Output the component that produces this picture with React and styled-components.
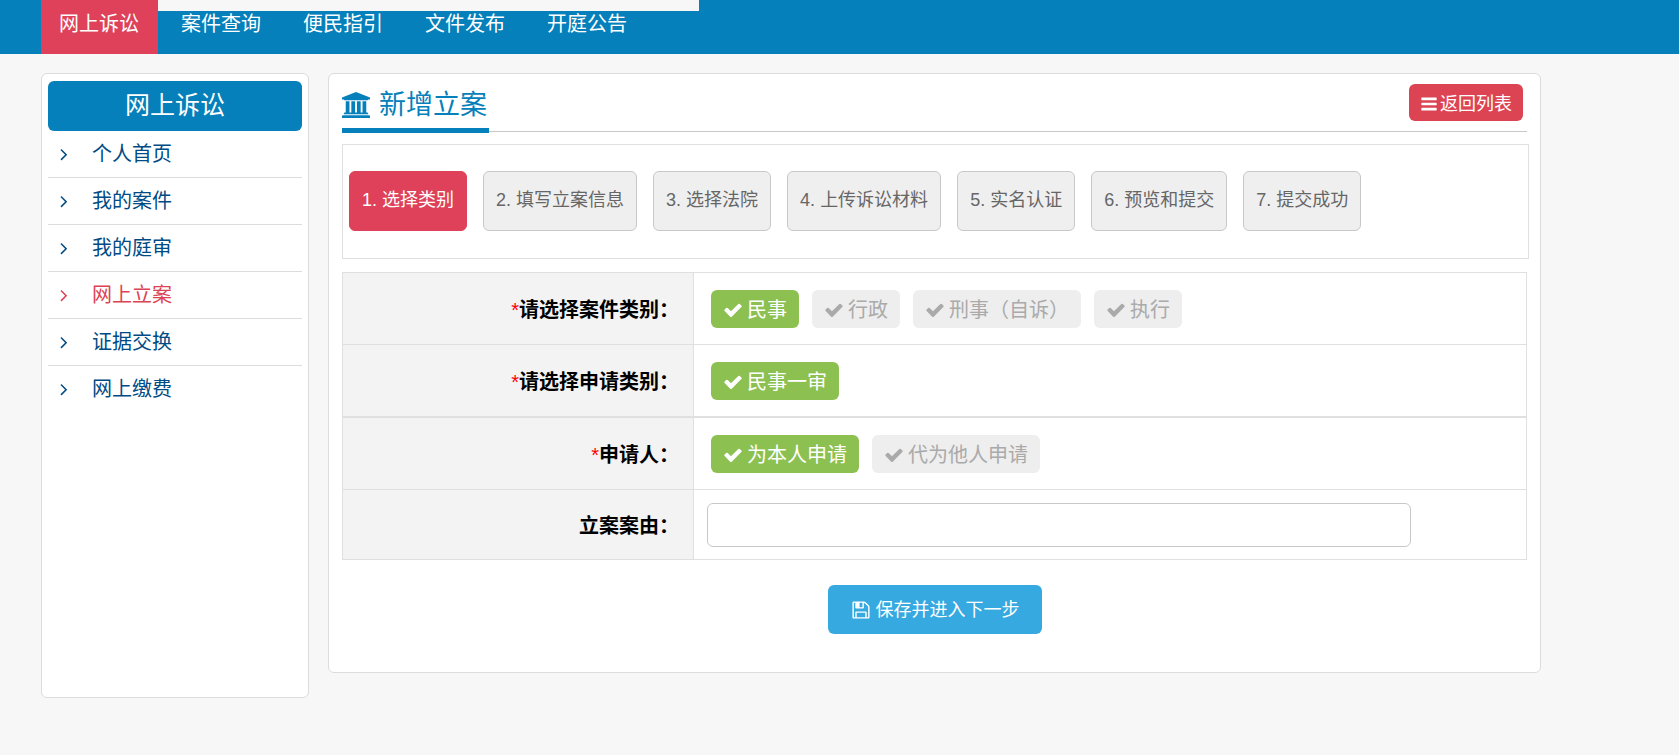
import React, { useState } from 'react';
import styled, { createGlobalStyle } from 'styled-components';

const GlobalStyle = createGlobalStyle`
  *, *::before, *::after {
    box-sizing: border-box;
  }

  body {
    margin: 0;
    background-color: #f7f7f7;
    color: #000;
    font-family: 'Liberation Sans', 'Noto Sans CJK SC', sans-serif;
    font-size: 20px;
    line-height: 30px;
  }

  button, input {
    font: inherit;
  }

  a {
    text-decoration: none;
  }
`;

const NavBar = styled.nav`
  position: relative;
  display: flex;
  gap: 5px;
  height: 54px;
  padding-left: 41px;
  background-color: #0580ba;
`;

const NavLink = styled.a`
  padding: 9px 19px 15px 18px;
  background-color: ${({ $active }) => ($active ? '#de4159' : 'transparent')};
  color: #fff;
  white-space: nowrap;
`;

/* plain strip hanging over the top edge of the menu */
const NavStrip = styled.div`
  position: absolute;
  top: 0;
  left: 158px;
  width: 541px;
  height: 11px;
  background-color: #f7f7f7;
`;

const Page = styled.div`
  display: flex;
  align-items: flex-start;
  gap: 19px;
  padding: 19px 138px 56px 41px;
`;

const Panel = styled.div`
  border: 1px solid #dcdcdc;
  border-radius: 6px;
  background-color: #fff;
`;

const Sidebar = styled(Panel).attrs({ as: 'aside' })`
  flex: 0 0 268px;
  min-height: 625px;
  padding: 7px 6px;
`;

const SidebarTitle = styled.h2`
  margin: 0;
  padding: 8px 0 10px;
  border-radius: 6px;
  background-color: #0580ba;
  color: #fff;
  font-size: 25px;
  font-weight: 400;
  line-height: 32px;
  text-align: center;
`;

const Menu = styled.ul`
  margin: 0;
  padding: 0;
  list-style: none;
`;

const MenuItem = styled.li`
  border-bottom: 1px solid #dcdcdc;

  &:last-child {
    border-bottom: 0;
  }
`;

const MenuLink = styled.a`
  display: flex;
  align-items: center;
  gap: 18px;
  padding: 8px 0 8px 6px;
  color: ${({ $active }) => ($active ? '#dc4453' : '#004b84')};
`;

const Main = styled(Panel).attrs({ as: 'main' })`
  flex: 1;
  min-width: 0;
  min-height: 600px;
  padding: 10px 13px 38px;
`;

const Header = styled.header`
  display: flex;
  align-items: flex-start;
  justify-content: space-between;
  height: 48px;
  border-bottom: 1px solid #c8c8c8;
`;

const Title = styled.h1`
  display: flex;
  align-items: center;
  gap: 9px;
  height: 49px;
  margin: 0;
  padding: 0 2px 2px 0;
  border-bottom: 5px solid #0580ba;
  color: #0580ba;
  font-size: 27px;
  font-weight: 400;
  white-space: nowrap;
`;

const BackLink = styled.a`
  display: flex;
  align-items: center;
  gap: 2px;
  height: 37px;
  margin-right: 4px;
  padding: 2px 11px 0;
  border-radius: 6px;
  background-color: #dc4453;
  color: #fff;
  font-size: 18px;
`;

const Steps = styled.ol`
  display: flex;
  gap: 16px;
  margin: 12px -2px 13px 0;
  padding: 26px 6px 27px;
  border: 1px solid #e0e0e0;
  list-style: none;
`;

const Step = styled.li`
  height: 60px;
  padding: 13px 12px;
  border: 1px solid ${({ $active }) => ($active ? '#de4159' : '#c8c8c8')};
  border-radius: 6px;
  background-color: ${({ $active }) => ($active ? '#de4159' : '#efefef')};
  color: ${({ $active }) => ($active ? '#fff' : '#666')};
  font-size: 18px;
  white-space: nowrap;
`;

const FormTable = styled.table`
  width: 100%;
  border-collapse: collapse;
  table-layout: fixed;
`;

const LabelCell = styled.th`
  width: 351px;
  height: ${({ $short }) => ($short ? 70 : 72)}px;
  padding: 2px 14px 0 0;
  border: 1px solid #e0e0e0;
  background-color: #f3f3f3;
  font-weight: 700;
  text-align: right;
`;

const Required = styled.span`
  color: #f00;
  font-weight: 400;
`;

const FieldCell = styled.td`
  padding: 0 10px 0 13px;
  border: 1px solid #e0e0e0;
`;

const Choices = styled.div`
  display: flex;
  flex-wrap: wrap;
  gap: 13px;
  padding-left: 4px;
`;

const Choice = styled.button`
  display: flex;
  align-items: center;
  gap: 4px;
  height: 38px;
  padding: 3px 12px 0;
  border: 0;
  border-radius: 6px;
  background-color: ${({ $active }) => ($active ? '#8cc152' : '#eee')};
  color: ${({ $active }) => ($active ? '#fff' : '#aaa')};
  cursor: pointer;
`;

const TextInput = styled.input`
  display: block;
  width: 87%;
  height: 44px;
  padding: 6px 12px;
  border: 1px solid #c8c8c8;
  border-radius: 6px;
  background-color: #fff;
`;

const Actions = styled.div`
  display: flex;
  justify-content: center;
  margin-top: 25px;
`;

const SubmitButton = styled.button`
  display: flex;
  align-items: center;
  gap: 5px;
  height: 49px;
  padding: 0 22px 0 23px;
  border: 0;
  border-radius: 6px;
  background-color: #35a9e0;
  color: #fff;
  font-size: 18px;
  cursor: pointer;
`;

const Svg = styled.svg`
  flex: none;
  fill: currentColor;
`;

const ICONS = {
  angle:
    'M1171 960q0 13-10 23l-466 466q-10 10-23 10t-23-10l-50-50q-10-10-10-23t10-23l393-393-393-393q-10-10-10-23t10-23l50-50q10-10 23-10t23 10l466 466q10 10 10 23z',
  bars:
    'M1664 1344v128q0 26-19 45t-45 19h-1408q-26 0-45-19t-19-45v-128q0-26 19-45t45-19h1408q26 0 45 19t19 45zm0-512v128q0 26-19 45t-45 19h-1408q-26 0-45-19t-19-45v-128q0-26 19-45t45-19h1408q26 0 45 19t19 45zm0-512v128q0 26-19 45t-45 19h-1408q-26 0-45-19t-19-45v-128q0-26 19-45t45-19h1408q26 0 45 19t19 45z',
  check:
    'M1671 566q0 40-28 68l-724 724-136 136q-28 28-68 28t-68-28l-136-136-362-362q-28-28-28-68t28-68l136-136q28-28 68-28t68 28l294 295 656-657q28-28 68-28t68 28l136 136q28 28 28 68z',
  save:
    'M512 1536h768v-384h-768v384zm896 0h128v-896q0-14-10-38.5t-20-34.5l-281-281q-10-10-34-20t-39-10v416q0 40-28 68t-68 28h-576q-40 0-68-28t-28-68v-416h-128v1280h128v-416q0-40 28-68t68-28h832q40 0 68 28t28 68v416zm-384-928v-320q0-13-9.5-22.5t-22.5-9.5h-192q-13 0-22.5 9.5t-9.5 22.5v320q0 13 9.5 22.5t22.5 9.5h192q13 0 22.5-9.5t9.5-22.5zm640 32v928q0 40-28 68t-68 28h-1344q-40 0-68-28t-28-68v-1344q0-40 28-68t68-28h928q40 0 88 20t76 48l280 280q28 28 48 76t20 88z',
  court:
    'M960 0l960 384v128h-128q0 26-20.5 45t-48.5 19h-1526q-28 0-48.5-19t-20.5-45h-128v-128zm-704 640h256v768h128v-768h256v768h128v-768h256v768h128v-768h256v768h59q28 0 48.5 19t20.5 45v64h-1664v-64q0-26 20.5-45t48.5-19h59v-768zm1595 960q28 0 48.5 19t20.5 45v128h-1920v-128q0-26 20.5-45t48.5-19h1782z',
};

function Icon({ name, size, viewBox = '0 0 1792 1792' }) {
  return (
    <Svg width={size} height={size} viewBox={viewBox} aria-hidden="true">
      <path d={ICONS[name]} />
    </Svg>
  );
}

const NAV = ['网上诉讼', '案件查询', '便民指引', '文件发布', '开庭公告'];

const MENU = ['个人首页', '我的案件', '我的庭审', '网上立案', '证据交换', '网上缴费'];

const STEPS = ['选择类别', '填写立案信息', '选择法院', '上传诉讼材料', '实名认证', '预览和提交', '提交成功'];

function ChoiceRow({ label, options }) {
  const [selected, setSelected] = useState(options[0]);

  return (
    <tr>
      <LabelCell scope="row">
        <Required>*</Required>
        {label}：
      </LabelCell>
      <FieldCell>
        <Choices role="group" aria-label={label}>
          {options.map((option) => (
            <Choice
              key={option}
              type="button"
              $active={option === selected}
              aria-pressed={option === selected}
              onClick={() => setSelected(option)}
            >
              <Icon name="check" size={20} />
              {option}
            </Choice>
          ))}
        </Choices>
      </FieldCell>
    </tr>
  );
}

function App() {
  const [cause, setCause] = useState('');

  return (
    <>
      <GlobalStyle />
      <NavBar>
        {NAV.map((item, i) => (
          <NavLink key={item} href="#" $active={i === 0}>
            {item}
          </NavLink>
        ))}
        <NavStrip />
      </NavBar>

      <Page>
        <Sidebar>
          <SidebarTitle>网上诉讼</SidebarTitle>
          <Menu>
            {MENU.map((item) => (
              <MenuItem key={item}>
                <MenuLink href="#" $active={item === '网上立案'}>
                  <Icon name="angle" size={20} />
                  {item}
                </MenuLink>
              </MenuItem>
            ))}
          </Menu>
        </Sidebar>

        <Main>
          <Header>
            <Title>
              <Icon name="court" size={28} viewBox="0 0 1920 1792" />
              新增立案
            </Title>
            <BackLink href="#">
              <Icon name="bars" size={18} />
              返回列表
            </BackLink>
          </Header>

          <Steps>
            {STEPS.map((step, i) => (
              <Step key={step} $active={i === 0}>
                {i + 1}. {step}
              </Step>
            ))}
          </Steps>

          <FormTable>
            <tbody>
              <ChoiceRow label="请选择案件类别" options={['民事', '行政', '刑事（自诉）', '执行']} />
              <ChoiceRow label="请选择申请类别" options={['民事一审']} />
            </tbody>
          </FormTable>
          <FormTable>
            <tbody>
              <ChoiceRow label="申请人" options={['为本人申请', '代为他人申请']} />
              <tr>
                <LabelCell scope="row" $short>
                  <label htmlFor="cause">立案案由：</label>
                </LabelCell>
                <FieldCell>
                  <TextInput
                    id="cause"
                    type="text"
                    value={cause}
                    onChange={(e) => setCause(e.target.value)}
                  />
                </FieldCell>
              </tr>
            </tbody>
          </FormTable>

          <Actions>
            <SubmitButton type="button">
              <Icon name="save" size={20} />
              保存并进入下一步
            </SubmitButton>
          </Actions>
        </Main>
      </Page>
    </>
  );
}

export default App;
